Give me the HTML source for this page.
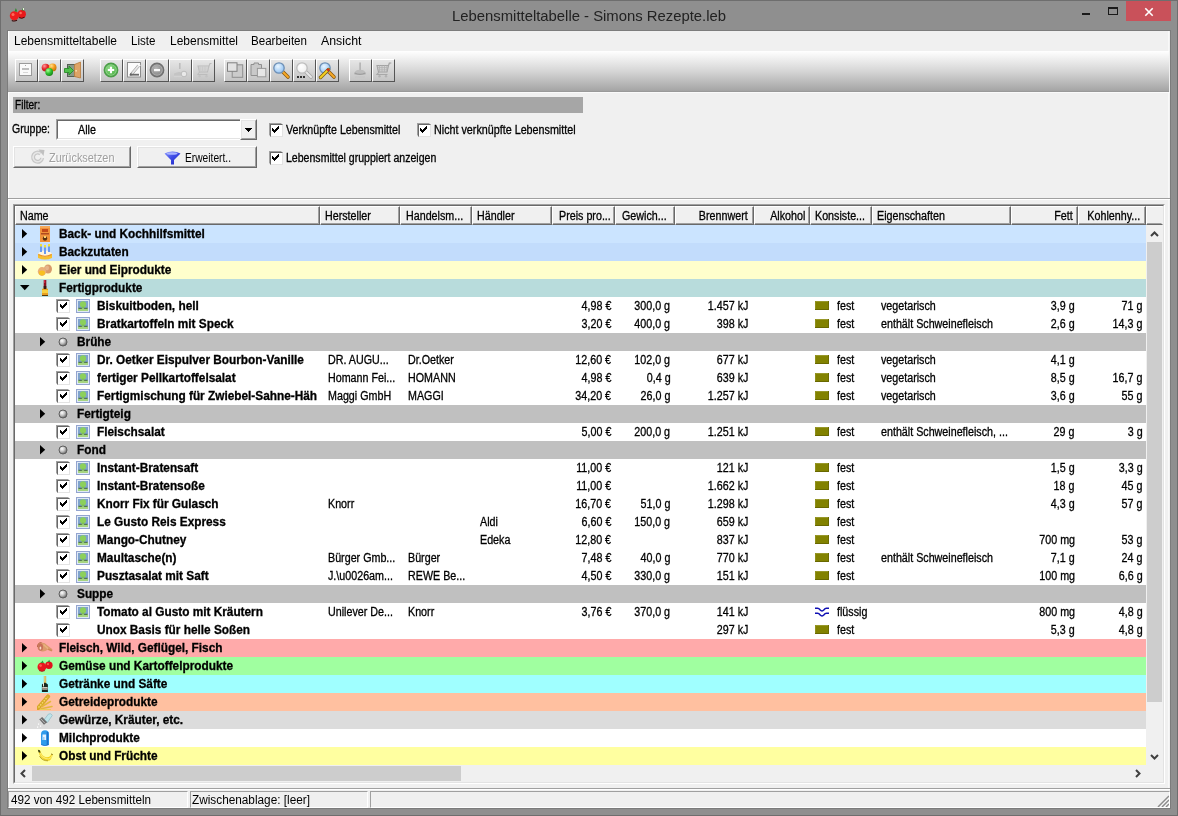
<!DOCTYPE html>
<html><head><meta charset="utf-8"><title>Lebensmitteltabelle</title><style>
*{margin:0;padding:0;box-sizing:border-box}
svg{display:block}
html,body{width:1178px;height:816px;overflow:hidden}
body{position:relative;background:#8f8f8f;font-family:"Liberation Sans",sans-serif;font-size:12px;color:#000}
.a{position:absolute}
.t,.tr{-webkit-text-stroke:.3px #000}
.t{position:absolute;white-space:nowrap;font-size:12px;line-height:18px;height:18px;transform-origin:0 0;transform:scaleX(.893)}
.tr{position:absolute;white-space:nowrap;font-size:12px;line-height:18px;height:18px;transform-origin:100% 0;transform:scaleX(.893);text-align:right}
.b{font-weight:bold;transform:scaleX(.985)}
.row{position:absolute;left:15px;width:1131px;height:18px}
.hc{position:absolute;top:206px;height:19px;background:#f0f0f0;border-left:1px solid #fff;border-top:1px solid #fff;border-right:1px solid #696969;border-bottom:1px solid #696969}
.hc:after{content:"";position:absolute;left:0;top:0;right:0;bottom:0;border-right:1px solid #a0a0a0;border-bottom:1px solid #a0a0a0}
.hl{border-right-color:#f0f0f0}.hl:after{border-right-color:#f0f0f0}
.cb{position:absolute;width:13px;height:13px;background:#fff;border:1px solid;border-color:#a0a0a0 #fff #fff #a0a0a0}
.cb:before{content:"";position:absolute;left:0;top:0;width:11px;height:11px;border:1px solid;border-color:#696969 #e3e3e3 #e3e3e3 #696969}
.cb svg{position:absolute;left:2px;top:2px}
.cl svg{left:3px}
.btn{position:absolute;background:#f0f0f0;border:1px solid;border-color:#fff #696969 #696969 #fff}
.btn:before{content:"";position:absolute;left:0;top:0;right:0;bottom:0;border:1px solid;border-color:#e3e3e3 #a0a0a0 #a0a0a0 #e3e3e3}
.tb{position:absolute;top:59px;width:23px;height:23px;background:linear-gradient(#e6e6e6,#c4c4c4);border:1px solid;border-color:#fff #555 #555 #fff}
.tb svg{position:absolute;left:1px;top:1px}
</style></head><body><div id="w" style="position:absolute;left:0;top:0;width:1178px;height:816px;will-change:transform">
<div class="a" style="left:0;top:0;width:1178px;height:816px;border:1px solid #6e6e6e"></div>
<div class="a" style="left:7px;top:30px;width:1164px;height:779px;background:#7c7c7c"></div>
<div class="a" style="left:8px;top:31px;width:1162px;height:777px;background:#f0f0f0"></div>
<div class="a" style="left:8px;top:31px;width:1px;height:757px;background:#fff"></div>
<div class="a" style="left:1168px;top:31px;width:1px;height:757px;background:#f8f8f8"></div>
<div id="title" class="a" style="left: 451.5px; top: 5px; font-size: 15px; line-height: 22px; white-space: nowrap; color: rgb(34, 34, 34); transform-origin: 0px 0px; transform: scaleX(0.9898);">Lebensmitteltabelle - Simons Rezepte.leb</div>
<svg class="a" style="left:9px;top:7px" width="18" height="15" viewBox="0 0 18 15">
<circle cx="12.8" cy="7.2" r="4.1" fill="#e8191c"></circle><path d="M10 10.6q2.800 1.600 5.600-.400" stroke="#4a0808" stroke-width="1" fill="none"></path>
<circle cx="5.400" cy="8.800" r="4.600" fill="#ee1c1e"></circle>
<circle cx="4" cy="7.400" r="1.500" fill="#ff6a5a"></circle><circle cx="11.600" cy="6" r="1.300" fill="#ff6a5a"></circle>
<path d="M5.500 4.600l1.400-3.600 1.400 3.600zM13 3.400l1.200-3 1.200 3z" fill="#2a8a2a"></path><rect x="14" y="1" width="1" height="2" fill="#e8f8d8"></rect>
<path d="M2.800 13.400q2.600 1.200 5.200-.200" stroke="#3a0606" stroke-width="1.100" fill="none"></path></svg>
<div class="a" style="left:1082px;top:13px;width:8px;height:2px;background:#1a1a1a"></div>
<div class="a" style="left:1108px;top:7px;width:10px;height:8px;border:1px solid #1a1a1a;border-top-width:2px"></div>
<div class="a" style="left:1126px;top:1px;width:45px;height:20px;background:#c9515a"></div>
<svg class="a" style="left:1144px;top:7px" width="10" height="10" viewBox="0 0 10 10"><path d="M1.3 1.3l7.4 7.4M8.7 1.3l-7.4 7.4" stroke="#fff" stroke-width="1.6"></path></svg>
<div class="a" style="left: 14px; top: 32px; line-height: 18px; white-space: nowrap; transform-origin: 0px 0px; transform: scaleX(0.9961);">Lebensmitteltabelle</div>
<div class="a" style="left: 131px; top: 32px; line-height: 18px; white-space: nowrap; transform-origin: 0px 0px; transform: scaleX(0.9661);">Liste</div>
<div class="a" style="left: 169.5px; top: 32px; line-height: 18px; white-space: nowrap; transform-origin: 0px 0px; transform: scaleX(0.9993);">Lebensmittel</div>
<div class="a" style="left: 251px; top: 32px; line-height: 18px; white-space: nowrap; transform-origin: 0px 0px; transform: scaleX(0.9647);">Bearbeiten</div>
<div class="a" style="left: 321px; top: 32px; line-height: 18px; white-space: nowrap; transform-origin: 0px 0px; transform: scaleX(1.029);">Ansicht</div>
<div class="a" style="left:8px;top:51px;width:1161px;height:41px;background:linear-gradient(#ffffff 0%,#f5f5f5 12%,#d5d5d5 50%,#a6a6a6 96%,#949494 100%)"></div>
<div class="tb" style="left:15px"><svg width="19" height="19" viewBox="0 0 19 19"><rect x="2.5" y="2.5" width="12" height="12" fill="#fafafa" stroke="#9a9a9a"></rect><rect x="5" y="7" width="7" height="2" fill="#bdbdbd"></rect><rect x="6" y="11" width="5" height="1" fill="#d8d8d8"></rect><rect x="8" y="4" width="1" height="1" fill="#aaa"></rect></svg></div>
<div class="tb" style="left:38px"><svg width="19" height="19" viewBox="0 0 19 19"><defs><radialGradient id="rb" cx=".35" cy=".3" r=".8"><stop offset="0" stop-color="#ff9a9a"></stop><stop offset=".5" stop-color="#e3262b"></stop><stop offset="1" stop-color="#9a1010"></stop></radialGradient>
<radialGradient id="ob" cx=".35" cy=".3" r=".8"><stop offset="0" stop-color="#ffe08a"></stop><stop offset=".5" stop-color="#f59a1a"></stop><stop offset="1" stop-color="#b96a08"></stop></radialGradient>
<radialGradient id="gb" cx=".35" cy=".3" r=".8"><stop offset="0" stop-color="#a8ff9a"></stop><stop offset=".5" stop-color="#2fc02f"></stop><stop offset="1" stop-color="#157a15"></stop></radialGradient></defs>
<circle cx="5.6" cy="6.6" r="3.9" fill="url(#rb)"></circle><circle cx="12.6" cy="6.4" r="3.9" fill="url(#ob)"></circle><circle cx="9.2" cy="11" r="3.9" fill="url(#gb)"></circle></svg></div>
<div class="tb" style="left:61px"><svg width="19" height="19" viewBox="0 0 19 19"><rect x="4.5" y="3.5" width="8" height="12" fill="#8a9a8a" stroke="#556055"></rect>
<path d="M11.5 3.5l6-2.5v16l-6-1.5z" fill="#dea466" stroke="#b87a3a" stroke-width=".8"></path><rect x="12.5" y="9" width="1.2" height="1.6" fill="#fff2c8"></rect>
<path d="M1.5 7.5h4.5v-2.5l4.5 4.5-4.5 4.5v-2.5h-4.5z" fill="#4fc04a" stroke="#2a8a2a" stroke-width=".9"></path></svg></div>
<div class="tb" style="left:100px"><svg width="19" height="19" viewBox="0 0 19 19"><defs><radialGradient id="gp" cx=".4" cy=".35" r=".75"><stop offset="0" stop-color="#9ee096"></stop><stop offset=".7" stop-color="#62c05a"></stop><stop offset="1" stop-color="#58b450"></stop></radialGradient></defs>
<g transform="translate(-1,-1)"><circle cx="10" cy="10" r="6.600" fill="#8fd68a" stroke="#4c9e48" stroke-width="1.600"></circle><circle cx="10" cy="10" r="4.800" fill="url(#gp)"></circle><path d="M9 6.800h2v2.200h2.200v2h-2.200v2.200h-2v-2.200h-2.200v-2h2.200z" fill="#fff"></path></g></svg></div>
<div class="tb" style="left:123px"><svg width="19" height="19" viewBox="0 0 19 19"><g transform="translate(-2,-2)"><rect x="4.500" y="3.500" width="13" height="14.500" fill="#fbfbfb" stroke="#8c8c8c"></rect>
<path d="M7.500 14.500l8-9.500 1.800 1.600-8 9.500-2.400.600z" fill="#e6e6e6" stroke="#a2a2a2" stroke-width=".8"></path><path d="M14.600 4.600l2.600 2.200" stroke="#fff" stroke-width="1.600"></path><rect x="7" y="14.800" width="9" height="1.800" fill="#6a6a6a"></rect><path d="M7 15.800l1.500-2" stroke="#5a5a5a" stroke-width="1"></path></g></svg></div>
<div class="tb" style="left:146px"><svg width="19" height="19" viewBox="0 0 19 19"><defs><radialGradient id="gm" cx=".4" cy=".35" r=".75"><stop offset="0" stop-color="#b8b8b8"></stop><stop offset=".7" stop-color="#969696"></stop><stop offset="1" stop-color="#8c8c8c"></stop></radialGradient></defs>
<g transform="translate(-1,-1)"><circle cx="10" cy="10" r="6.600" fill="#b0b0b0" stroke="#707070" stroke-width="1.600"></circle><circle cx="10" cy="10" r="4.800" fill="url(#gm)"></circle><rect x="7" y="9" width="6" height="2.200" fill="#fafafa"></rect></g></svg></div>
<div class="tb" style="left:169px"><svg width="19" height="19" viewBox="0 0 19 19"><rect x="8" y="2" width="1.6" height="6" fill="#bdbdbd"></rect><path d="M3 12.5q6-3 9 0v2h-9z" fill="#c4c4c4"></path><circle cx="13" cy="13" r="2.8" fill="#e9e9e9" stroke="#bcbcbc"></circle><rect x="3" y="15" width="8" height="1" fill="#d2d2d2"></rect></svg></div>
<div class="tb" style="left:192px"><svg width="19" height="19" viewBox="0 0 19 19"><path d="M4 5h11l-1.5 6h-8zM15 5l1-2.5h1.5" fill="none" stroke="#bcbcbc" stroke-width="1.1"></path><path d="M6 5v6M8.5 5v6M11 5v6M4.5 7h10M5 9h9" stroke="#c8c8c8" stroke-width=".8"></path>
<path d="M5.5 11l-2 2.5h10" fill="none" stroke="#bcbcbc"></path><circle cx="5.5" cy="15.2" r="1.2" fill="#c2c2c2"></circle><circle cx="12.5" cy="15.2" r="1.2" fill="#c2c2c2"></circle></svg></div>
<div class="tb" style="left:224px"><svg width="19" height="19" viewBox="0 0 19 19"><rect x="6.200" y="3.800" width="10.500" height="12.500" fill="#cbcbcb" stroke="#8e8e8e"></rect><rect x="1.500" y="1.800" width="9.500" height="8.500" fill="#e3e3e3" stroke="#808080"></rect></svg></div>
<div class="tb" style="left:247px"><svg width="19" height="19" viewBox="0 0 19 19"><path d="M2 3.500h3v-1.500h4.500v1.500h3v11h-10.500z" fill="#c9c9c9" stroke="#909090"></path><rect x="8.400" y="7.400" width="8.400" height="8.400" fill="#e6e6e6" stroke="#9a9a9a"></rect></svg></div>
<div class="tb" style="left:270px"><svg width="19" height="19" viewBox="0 0 19 19"><defs><radialGradient id="lza" cx=".4" cy=".35" r=".8"><stop offset="0" stop-color="#eaf6ff"></stop><stop offset="1" stop-color="#7fb8f2"></stop></radialGradient></defs>
<path d="M10.5 10.5l5.5 5.5" stroke="#8a5a10" stroke-width="3.6" stroke-linecap="round"></path><path d="M10.5 10.5l5.5 5.5" stroke="#f7a928" stroke-width="2" stroke-linecap="round"></path>
<circle cx="7" cy="7" r="5.2" fill="url(#lza)" stroke="#6d8fb5" stroke-width="1.3"></circle></svg></div>
<div class="tb" style="left:293px"><svg width="19" height="19" viewBox="0 0 19 19"><defs><radialGradient id="lzb" cx=".4" cy=".35" r=".8"><stop offset="0" stop-color="#ffffff"></stop><stop offset="1" stop-color="#ececec"></stop></radialGradient></defs>
<path d="M10.5 10.5l5.5 5.5" stroke="#a8a8a8" stroke-width="3.6" stroke-linecap="round"></path><path d="M10.5 10.5l5.5 5.5" stroke="#e8e8e8" stroke-width="2" stroke-linecap="round"></path>
<circle cx="7" cy="7" r="5.2" fill="url(#lzb)" stroke="#bdbdbd" stroke-width="1.3"></circle><rect x="2" y="15" width="2" height="2" fill="#333"></rect><rect x="5" y="15" width="2" height="2" fill="#333"></rect><rect x="8" y="15" width="2" height="2" fill="#333"></rect></svg></div>
<div class="tb" style="left:316px"><svg width="19" height="19" viewBox="0 0 19 19"><defs><radialGradient id="lzc" cx=".4" cy=".35" r=".8"><stop offset="0" stop-color="#eaf6ff"></stop><stop offset="1" stop-color="#7fb8f2"></stop></radialGradient></defs>
<path d="M10.5 10.5l5.5 5.5" stroke="#8a5a10" stroke-width="3.6" stroke-linecap="round"></path><path d="M10.5 10.5l5.5 5.5" stroke="#f7a928" stroke-width="2" stroke-linecap="round"></path>
<circle cx="7" cy="7" r="5.2" fill="url(#lzc)" stroke="#6d8fb5" stroke-width="1.3"></circle><path d="M2.5 16.5l8-8" stroke="#7a5a08" stroke-width="3.4" stroke-linecap="round"></path><path d="M2.5 16.5l8-8" stroke="#f5d020" stroke-width="2" stroke-linecap="round"></path><path d="M9.3 9.7l1.6-1.6" stroke="#d82020" stroke-width="2.4"></path></svg></div>
<div class="tb" style="left:349px"><svg width="19" height="19" viewBox="0 0 19 19"><rect x="8.300" y="1.500" width="1.600" height="7.500" fill="#b2b2b2"></rect><path d="M3.500 12.500q0-3.500 5.500-3.700 5.500.200 5.500 3.700v1.500h-11z" fill="#bdbdbd"></path><path d="M3.500 12q5.500 2.800 11 0" stroke="#9c9c9c" stroke-width="1.200" fill="none"></path><rect x="4" y="15.500" width="10" height="1" fill="#c4c4c4"></rect></svg></div>
<div class="tb" style="left:372px"><svg width="19" height="19" viewBox="0 0 19 19"><path d="M3 4.500h11.500l-1.500 6.500h-8.500zM14.500 4.500l.8-2.500h2" fill="#d4d4d4" stroke="#a2a2a2" stroke-width="1.100"></path><path d="M5.500 4.500v6.500M8 4.500v6.500M10.500 4.500v6.500M12.800 4.500v6.500M3.500 6.600h10.600M4 8.800h9.600" stroke="#b2b2b2" stroke-width=".8"></path>
<path d="M5 11l-2 2.500h10.500" fill="none" stroke="#a8a8a8" stroke-width="1.200"></path><circle cx="5.500" cy="15.200" r="1.200" fill="#b2b2b2"></circle><circle cx="12" cy="15.200" r="1.200" fill="#b2b2b2"></circle></svg></div>
<div class="a" style="left:8px;top:92px;width:1162px;height:1px;background:#fafafa"></div>
<div class="a" style="left:13px;top:97px;width:570px;height:16px;background:#a6a6a6"></div>
<div class="a" style="left: 14.6px; top: 96px; line-height: 18px; white-space: nowrap; transform-origin: 0px 0px; -webkit-text-stroke: 0.3px rgb(0, 0, 0); transform: scaleX(0.84);">Filter:</div>
<div class="a" style="left: 12.2px; top: 120px; line-height: 18px; white-space: nowrap; transform-origin: 0px 0px; -webkit-text-stroke: 0.3px rgb(0, 0, 0); transform: scaleX(0.8764);">Gruppe:</div>
<div class="a" style="left:56px;top:119px;width:201px;height:21px;background:#fff;border:1px solid;border-color:#a0a0a0 #fff #fff #a0a0a0"><div class="a" style="left:0;top:0;right:0;bottom:0;border:1px solid;border-color:#696969 #e3e3e3 #e3e3e3 #696969"></div><div class="btn" style="right:-1px;top:-1px;width:17px;height:21px"><svg class="a" style="left:4px;top:8px" width="7" height="4" viewBox="0 0 7 4" shape-rendering="crispEdges"><path d="M0 0h7v1h-1v1h-1v1h-1v1h-1v-1h-1v-1h-1v-1h-1z" fill="#000"></path></svg></div></div>
<div class="t" style="left:78px;top:121px">Alle</div>
<div class="cb" style="left:269px;top:123px"><svg width="7" height="7" viewBox="0 0 7 7" shape-rendering="crispEdges"><path d="M0 2h1v1h1v1h1v-1h1v-1h1v-1h1v-1h1v3h-1v1h-1v1h-1v1h-1v1h-1v-1h-1v-1h-1z" fill="#000"></path></svg></div>
<div class="a" style="left: 285.6px; top: 121px; line-height: 18px; white-space: nowrap; transform-origin: 0px 0px; -webkit-text-stroke: 0.3px rgb(0, 0, 0); transform: scaleX(0.8878);">Verknüpfte Lebensmittel</div>
<div class="cb" style="left:417px;top:123px"><svg width="7" height="7" viewBox="0 0 7 7" shape-rendering="crispEdges"><path d="M0 2h1v1h1v1h1v-1h1v-1h1v-1h1v-1h1v3h-1v1h-1v1h-1v1h-1v1h-1v-1h-1v-1h-1z" fill="#000"></path></svg></div>
<div class="a" style="left: 434.3px; top: 121px; line-height: 18px; white-space: nowrap; transform-origin: 0px 0px; -webkit-text-stroke: 0.3px rgb(0, 0, 0); transform: scaleX(0.8957);">Nicht verknüpfte Lebensmittel</div>
<div class="cb" style="left:269px;top:151px"><svg width="7" height="7" viewBox="0 0 7 7" shape-rendering="crispEdges"><path d="M0 2h1v1h1v1h1v-1h1v-1h1v-1h1v-1h1v3h-1v1h-1v1h-1v1h-1v1h-1v-1h-1v-1h-1z" fill="#000"></path></svg></div>
<div class="a" style="left: 285.6px; top: 149px; line-height: 18px; white-space: nowrap; transform-origin: 0px 0px; -webkit-text-stroke: 0.3px rgb(0, 0, 0); transform: scaleX(0.8801);">Lebensmittel gruppiert anzeigen</div>
<div class="btn" style="left:13px;top:146px;width:118px;height:22px"></div>
<div class="a" style="left: 48.5px; top: 149px; line-height: 18px; white-space: nowrap; transform-origin: 0px 0px; color: rgb(160, 160, 160); text-shadow: rgb(255, 255, 255) 1px 1px 0px; transform: scaleX(0.9093);">Zurücksetzen</div>
<svg class="a" style="left:30px;top:149px" width="16" height="16" viewBox="0 0 16 16"><path d="M12.2 9a4.6 4.6 0 1 1-1.6-4.4" stroke="#c6c6c6" stroke-width="4" fill="none"></path><path d="M12.2 9a4.6 4.6 0 1 1-1.6-4.4" stroke="#e6e6e6" stroke-width="1.6" fill="none"></path><path d="M8.5 0.5l6 .5-1 6z" fill="#c0c0c0"></path></svg>
<div class="btn" style="left:137px;top:146px;width:120px;height:22px"></div>
<div class="a" style="left: 184.5px; top: 149px; line-height: 18px; white-space: nowrap; transform-origin: 0px 0px; transform: scaleX(0.8516);">Erweitert..</div>
<svg class="a" style="left:164px;top:151px" width="17" height="14" viewBox="0 0 17 14"><defs><linearGradient id="fg" x1="0" y1="0" x2="1" y2="1"><stop offset="0" stop-color="#8a98ff"></stop><stop offset=".45" stop-color="#3f4ce6"></stop><stop offset="1" stop-color="#1c24c0"></stop></linearGradient></defs>
<path d="M0.5 2.5Q8.5-1.5 16.5 2.5L10 9v4.5H7V9z" fill="url(#fg)"></path><ellipse cx="8" cy="2.5" rx="5.5" ry="1.3" fill="#aab4ff"></ellipse></svg>
<div class="a" style="left:8px;top:198px;width:1162px;height:1px;background:#a0a0a0"></div>
<div class="a" style="left:8px;top:199px;width:1162px;height:1px;background:#fff"></div>
<div class="a" style="left:13px;top:204px;width:1152px;height:580px;border:1px solid;border-color:#a0a0a0 #fff #fff #a0a0a0"></div>
<div class="a" style="left:14px;top:205px;width:1150px;height:578px;border:1px solid;border-color:#696969 #e3e3e3 #e3e3e3 #696969;background:#fff"></div>
<div class="hc" style="left:15px;width:305px"></div>
<div class="t" style="left:20.2px;top:207px;line-height:19px">Name</div>
<div class="hc" style="left:320px;width:80px"></div>
<div class="t" style="left:325.2px;top:207px;line-height:19px">Hersteller</div>
<div class="hc" style="left:400px;width:72px"></div>
<div class="t" style="left:406.2px;top:207px;line-height:19px">Handelsm...</div>
<div class="hc" style="left:472px;width:80px"></div>
<div class="t" style="left:477.2px;top:207px;line-height:19px">Händler</div>
<div class="hc" style="left:552px;width:63px"></div>
<div class="t" style="left:558.7px;top:207px;line-height:19px">Preis pro...</div>
<div class="hc" style="left:615px;width:60px"></div>
<div class="t" style="left:622.4000000000001px;top:207px;line-height:19px">Gewich...</div>
<div class="hc" style="left:675px;width:79px"></div>
<div class="tr" style="right:430.5px;top:207px;line-height:19px">Brennwert</div>
<div class="hc" style="left:754px;width:56px"></div>
<div class="tr" style="right:373px;top:207px;line-height:19px">Alkohol</div>
<div class="hc" style="left:810px;width:62px"></div>
<div class="t" style="left:815.2px;top:207px;line-height:19px">Konsiste...</div>
<div class="hc" style="left:872px;width:139px"></div>
<div class="t" style="left:877.2px;top:207px;line-height:19px">Eigenschaften</div>
<div class="hc" style="left:1011px;width:67px"></div>
<div class="tr" style="right:105.70000000000005px;top:207px;line-height:19px">Fett</div>
<div class="hc" style="left:1078px;width:68px"></div>
<div class="tr" style="right:38px;top:207px;line-height:19px">Kohlenhy...</div>
<div class="hc hl" style="left:1146px;width:17px"></div>
<div class="row" style="top:225px;background:#cbe4ff"></div>
<svg class="a" style="left:22px;top:229px" width="6" height="10" viewBox="0 0 6 10"><path d="M0 0v9.5l5.2-4.75z" fill="#000"></path></svg>
<div class="a" style="left:37px;top:226px;width:16px;height:16px"><svg width="16" height="16" viewBox="0 0 16 16"><rect x="3" y="0" width="10" height="16" fill="#f0913a"></rect><rect x="3" y="0" width="10" height="2" fill="#f6a85a"></rect><rect x="5" y="3" width="6" height="3" fill="#c44a1a"></rect><rect x="4" y="7" width="8" height="1.5" fill="#b04a20"></rect><circle cx="8" cy="12.5" r="2.2" fill="#5a3010"></circle><rect x="7" y="10" width="2" height="2" fill="#f8d070"></rect></svg></div>
<div class="t b" style="left:59.1px;top:225px">Back- und Kochhilfsmittel</div>
<div class="row" style="top:243px;background:#c2dcfc"></div>
<svg class="a" style="left:22px;top:247px" width="6" height="10" viewBox="0 0 6 10"><path d="M0 0v9.5l5.2-4.75z" fill="#000"></path></svg>
<div class="a" style="left:37px;top:244px;width:16px;height:16px"><svg width="16" height="16" viewBox="0 0 16 16"><path d="M1 10q7-4 14 0v4q-7 3-14 0z" fill="#f5c030"></path><ellipse cx="8" cy="9.5" rx="6.5" ry="3" fill="#fff4e0"></ellipse><path d="M1.5 10.5q6.5 3.5 13 0" stroke="#e88a20" stroke-width="1.2" fill="none"></path><rect x="3" y="2" width="2" height="6" fill="#6a9af0"></rect><rect x="7" y="3" width="2" height="7" fill="#6a9af0"></rect><rect x="11" y="2" width="2" height="6" fill="#6a9af0"></rect><rect x="3" y="0" width="2" height="2.5" fill="#f0e040"></rect><rect x="7" y="1" width="2" height="2.5" fill="#f0e040"></rect><rect x="11" y="0" width="2" height="2.5" fill="#f0e040"></rect></svg></div>
<div class="t b" style="left:59.1px;top:243px">Backzutaten</div>
<div class="row" style="top:261px;background:#ffffcc"></div>
<svg class="a" style="left:22px;top:265px" width="6" height="10" viewBox="0 0 6 10"><path d="M0 0v9.5l5.2-4.75z" fill="#000"></path></svg>
<div class="a" style="left:37px;top:262px;width:16px;height:16px"><svg width="16" height="16" viewBox="0 0 16 16"><ellipse cx="11" cy="7" rx="4" ry="4.6" fill="#d89a6a"></ellipse><ellipse cx="10" cy="6" rx="2" ry="2.4" fill="#e6b48a"></ellipse><ellipse cx="5" cy="9.5" rx="4.2" ry="4.4" fill="#eab078"></ellipse><ellipse cx="5" cy="11" rx="3" ry="2.4" fill="#f8c020"></ellipse></svg></div>
<div class="t b" style="left:59.1px;top:261px">Eier und Eiprodukte</div>
<div class="row" style="top:279px;background:#b8dcdc"></div>
<svg class="a" style="left:20px;top:285px" width="10" height="6" viewBox="0 0 10 6"><path d="M0 0h9.5l-4.75 5.2z" fill="#000"></path></svg>
<div class="a" style="left:37px;top:280px;width:16px;height:16px"><svg width="16" height="16" viewBox="0 0 16 16"><rect x="6.7" y="0" width="2.6" height="8" fill="#8a1020"></rect><rect x="7.2" y="0" width="1" height="3" fill="#e03050"></rect><path d="M5 9q3-2 6 0v7h-6z" fill="#e8a020"></path><rect x="5" y="10" width="6" height="3" fill="#f8d040"></rect><rect x="5" y="15" width="6" height="1.2" fill="#5a3a08"></rect><rect x="6.7" y="6" width="2.6" height="3" fill="#3a1a10"></rect></svg></div>
<div class="t b" style="left:59.1px;top:279px">Fertigprodukte</div>
<div class="cb cl" style="left:56px;top:299px"><svg width="7" height="7" viewBox="0 0 7 7" shape-rendering="crispEdges"><path d="M0 2h1v1h1v1h1v-1h1v-1h1v-1h1v-1h1v3h-1v1h-1v1h-1v1h-1v1h-1v-1h-1v-1h-1z" fill="#000"></path></svg></div>
<div class="a" style="left:76px;top:299px;width:14px;height:14px"><svg width="14" height="14" viewBox="0 0 14 14"><rect x=".5" y=".5" width="13" height="13" fill="#dfe9f6" stroke="#93a4d0"></rect><rect x="2" y="2" width="10" height="10" fill="#7fa3cc"></rect><rect x="2" y="9.300" width="10" height="2.700" fill="#a6d480"></rect><circle cx="7" cy="5.400" r="3.100" fill="#8cd05c"></circle><rect x="6.200" y="7.500" width="1.600" height="2" fill="#7cc04c"></rect><path d="M2.500 9.300h3.400M8.100 9.300h3.400" stroke="#3a5a32" stroke-width=".9"></path></svg></div>
<div class="t b" style="left:97.3px;top:297px">Biskuitboden, hell</div>
<div class="tr" style="right:566.5px;top:297px">4,98 €</div>
<div class="tr" style="right:507.5px;top:297px">300,0 g</div>
<div class="tr" style="right:429.3px;top:297px">1.457 kJ</div>
<div class="tr" style="right:103.4px;top:297px">3,9 g</div>
<div class="tr" style="right:35.6px;top:297px">71 g</div>
<div class="a" style="left:815px;top:301px;width:14px;height:9px"><svg width="14" height="9" viewBox="0 0 14 9"><rect width="14" height="9" fill="#828200"></rect><rect width="14" height="1" fill="#98982a"></rect><rect width="1" height="9" fill="#90901c"></rect><rect y="8" width="14" height="1" fill="#686800"></rect><rect x="13" width="1" height="9" fill="#6c6c00"></rect></svg></div>
<div class="t" style="left:836.5px;top:297px">fest</div>
<div class="t" style="left:880.5px;top:297px">vegetarisch</div>
<div class="cb cl" style="left:56px;top:317px"><svg width="7" height="7" viewBox="0 0 7 7" shape-rendering="crispEdges"><path d="M0 2h1v1h1v1h1v-1h1v-1h1v-1h1v-1h1v3h-1v1h-1v1h-1v1h-1v1h-1v-1h-1v-1h-1z" fill="#000"></path></svg></div>
<div class="a" style="left:76px;top:317px;width:14px;height:14px"><svg width="14" height="14" viewBox="0 0 14 14"><rect x=".5" y=".5" width="13" height="13" fill="#dfe9f6" stroke="#93a4d0"></rect><rect x="2" y="2" width="10" height="10" fill="#7fa3cc"></rect><rect x="2" y="9.300" width="10" height="2.700" fill="#a6d480"></rect><circle cx="7" cy="5.400" r="3.100" fill="#8cd05c"></circle><rect x="6.200" y="7.500" width="1.600" height="2" fill="#7cc04c"></rect><path d="M2.500 9.300h3.400M8.100 9.300h3.400" stroke="#3a5a32" stroke-width=".9"></path></svg></div>
<div class="t b" style="left:97.3px;top:315px">Bratkartoffeln mit Speck</div>
<div class="tr" style="right:566.5px;top:315px">3,20 €</div>
<div class="tr" style="right:507.5px;top:315px">400,0 g</div>
<div class="tr" style="right:429.3px;top:315px">398 kJ</div>
<div class="tr" style="right:103.4px;top:315px">2,6 g</div>
<div class="tr" style="right:35.6px;top:315px">14,3 g</div>
<div class="a" style="left:815px;top:319px;width:14px;height:9px"><svg width="14" height="9" viewBox="0 0 14 9"><rect width="14" height="9" fill="#828200"></rect><rect width="14" height="1" fill="#98982a"></rect><rect width="1" height="9" fill="#90901c"></rect><rect y="8" width="14" height="1" fill="#686800"></rect><rect x="13" width="1" height="9" fill="#6c6c00"></rect></svg></div>
<div class="t" style="left:836.5px;top:315px">fest</div>
<div class="t" style="left:880.5px;top:315px">enthält Schweinefleisch</div>
<div class="row" style="top:333px;background:#c0c0c0"></div>
<svg class="a" style="left:40px;top:337px" width="6" height="10" viewBox="0 0 6 10"><path d="M0 0v9.5l5.2-4.75z" fill="#000"></path></svg>
<div class="a" style="left:58px;top:337px;width:10px;height:10px"><svg width="10" height="10" viewBox="0 0 10 10"><defs><radialGradient id="sb" cx=".38" cy=".35" r=".7"><stop offset="0" stop-color="#ffffff"></stop><stop offset=".45" stop-color="#c8c8c8"></stop><stop offset="1" stop-color="#5c5c5c"></stop></radialGradient></defs><circle cx="5" cy="5" r="4" fill="url(#sb)" stroke="#5e5e5e" stroke-width="1"></circle></svg></div>
<div class="t b" style="left:76.7px;top:333px">Brühe</div>
<div class="cb cl" style="left:56px;top:353px"><svg width="7" height="7" viewBox="0 0 7 7" shape-rendering="crispEdges"><path d="M0 2h1v1h1v1h1v-1h1v-1h1v-1h1v-1h1v3h-1v1h-1v1h-1v1h-1v1h-1v-1h-1v-1h-1z" fill="#000"></path></svg></div>
<div class="a" style="left:76px;top:353px;width:14px;height:14px"><svg width="14" height="14" viewBox="0 0 14 14"><rect x=".5" y=".5" width="13" height="13" fill="#dfe9f6" stroke="#93a4d0"></rect><rect x="2" y="2" width="10" height="10" fill="#7fa3cc"></rect><rect x="2" y="9.300" width="10" height="2.700" fill="#a6d480"></rect><circle cx="7" cy="5.400" r="3.100" fill="#8cd05c"></circle><rect x="6.200" y="7.500" width="1.600" height="2" fill="#7cc04c"></rect><path d="M2.500 9.300h3.400M8.100 9.300h3.400" stroke="#3a5a32" stroke-width=".9"></path></svg></div>
<div class="t b" style="left:97.3px;top:351px">Dr. Oetker Eispulver Bourbon-Vanille</div>
<div class="t" style="left:328.3px;top:351px">DR. AUGU...</div>
<div class="t" style="left:408.3px;top:351px">Dr.Oetker</div>
<div class="tr" style="right:566.5px;top:351px">12,60 €</div>
<div class="tr" style="right:507.5px;top:351px">102,0 g</div>
<div class="tr" style="right:429.3px;top:351px">677 kJ</div>
<div class="tr" style="right:103.4px;top:351px">4,1 g</div>
<div class="a" style="left:815px;top:355px;width:14px;height:9px"><svg width="14" height="9" viewBox="0 0 14 9"><rect width="14" height="9" fill="#828200"></rect><rect width="14" height="1" fill="#98982a"></rect><rect width="1" height="9" fill="#90901c"></rect><rect y="8" width="14" height="1" fill="#686800"></rect><rect x="13" width="1" height="9" fill="#6c6c00"></rect></svg></div>
<div class="t" style="left:836.5px;top:351px">fest</div>
<div class="t" style="left:880.5px;top:351px">vegetarisch</div>
<div class="cb cl" style="left:56px;top:371px"><svg width="7" height="7" viewBox="0 0 7 7" shape-rendering="crispEdges"><path d="M0 2h1v1h1v1h1v-1h1v-1h1v-1h1v-1h1v3h-1v1h-1v1h-1v1h-1v1h-1v-1h-1v-1h-1z" fill="#000"></path></svg></div>
<div class="a" style="left:76px;top:371px;width:14px;height:14px"><svg width="14" height="14" viewBox="0 0 14 14"><rect x=".5" y=".5" width="13" height="13" fill="#dfe9f6" stroke="#93a4d0"></rect><rect x="2" y="2" width="10" height="10" fill="#7fa3cc"></rect><rect x="2" y="9.300" width="10" height="2.700" fill="#a6d480"></rect><circle cx="7" cy="5.400" r="3.100" fill="#8cd05c"></circle><rect x="6.200" y="7.500" width="1.600" height="2" fill="#7cc04c"></rect><path d="M2.500 9.300h3.400M8.100 9.300h3.400" stroke="#3a5a32" stroke-width=".9"></path></svg></div>
<div class="t b" style="left:97.3px;top:369px">fertiger Pellkartoffelsalat</div>
<div class="t" style="left:328.3px;top:369px">Homann Fei...</div>
<div class="t" style="left:408.3px;top:369px">HOMANN</div>
<div class="tr" style="right:566.5px;top:369px">4,98 €</div>
<div class="tr" style="right:507.5px;top:369px">0,4 g</div>
<div class="tr" style="right:429.3px;top:369px">639 kJ</div>
<div class="tr" style="right:103.4px;top:369px">8,5 g</div>
<div class="tr" style="right:35.6px;top:369px">16,7 g</div>
<div class="a" style="left:815px;top:373px;width:14px;height:9px"><svg width="14" height="9" viewBox="0 0 14 9"><rect width="14" height="9" fill="#828200"></rect><rect width="14" height="1" fill="#98982a"></rect><rect width="1" height="9" fill="#90901c"></rect><rect y="8" width="14" height="1" fill="#686800"></rect><rect x="13" width="1" height="9" fill="#6c6c00"></rect></svg></div>
<div class="t" style="left:836.5px;top:369px">fest</div>
<div class="t" style="left:880.5px;top:369px">vegetarisch</div>
<div class="cb cl" style="left:56px;top:389px"><svg width="7" height="7" viewBox="0 0 7 7" shape-rendering="crispEdges"><path d="M0 2h1v1h1v1h1v-1h1v-1h1v-1h1v-1h1v3h-1v1h-1v1h-1v1h-1v1h-1v-1h-1v-1h-1z" fill="#000"></path></svg></div>
<div class="a" style="left:76px;top:389px;width:14px;height:14px"><svg width="14" height="14" viewBox="0 0 14 14"><rect x=".5" y=".5" width="13" height="13" fill="#dfe9f6" stroke="#93a4d0"></rect><rect x="2" y="2" width="10" height="10" fill="#7fa3cc"></rect><rect x="2" y="9.300" width="10" height="2.700" fill="#a6d480"></rect><circle cx="7" cy="5.400" r="3.100" fill="#8cd05c"></circle><rect x="6.200" y="7.500" width="1.600" height="2" fill="#7cc04c"></rect><path d="M2.500 9.300h3.400M8.100 9.300h3.400" stroke="#3a5a32" stroke-width=".9"></path></svg></div>
<div class="t b" style="left:97.3px;top:387px">Fertigmischung für Zwiebel-Sahne-Häh</div>
<div class="t" style="left:328.3px;top:387px">Maggi GmbH</div>
<div class="t" style="left:408.3px;top:387px">MAGGI</div>
<div class="tr" style="right:566.5px;top:387px">34,20 €</div>
<div class="tr" style="right:507.5px;top:387px">26,0 g</div>
<div class="tr" style="right:429.3px;top:387px">1.257 kJ</div>
<div class="tr" style="right:103.4px;top:387px">3,6 g</div>
<div class="tr" style="right:35.6px;top:387px">55 g</div>
<div class="a" style="left:815px;top:391px;width:14px;height:9px"><svg width="14" height="9" viewBox="0 0 14 9"><rect width="14" height="9" fill="#828200"></rect><rect width="14" height="1" fill="#98982a"></rect><rect width="1" height="9" fill="#90901c"></rect><rect y="8" width="14" height="1" fill="#686800"></rect><rect x="13" width="1" height="9" fill="#6c6c00"></rect></svg></div>
<div class="t" style="left:836.5px;top:387px">fest</div>
<div class="t" style="left:880.5px;top:387px">vegetarisch</div>
<div class="row" style="top:405px;background:#c0c0c0"></div>
<svg class="a" style="left:40px;top:409px" width="6" height="10" viewBox="0 0 6 10"><path d="M0 0v9.5l5.2-4.75z" fill="#000"></path></svg>
<div class="a" style="left:58px;top:409px;width:10px;height:10px"><svg width="10" height="10" viewBox="0 0 10 10"><defs><radialGradient id="sb" cx=".38" cy=".35" r=".7"><stop offset="0" stop-color="#ffffff"></stop><stop offset=".45" stop-color="#c8c8c8"></stop><stop offset="1" stop-color="#5c5c5c"></stop></radialGradient></defs><circle cx="5" cy="5" r="4" fill="url(#sb)" stroke="#5e5e5e" stroke-width="1"></circle></svg></div>
<div class="t b" style="left:76.7px;top:405px">Fertigteig</div>
<div class="cb cl" style="left:56px;top:425px"><svg width="7" height="7" viewBox="0 0 7 7" shape-rendering="crispEdges"><path d="M0 2h1v1h1v1h1v-1h1v-1h1v-1h1v-1h1v3h-1v1h-1v1h-1v1h-1v1h-1v-1h-1v-1h-1z" fill="#000"></path></svg></div>
<div class="a" style="left:76px;top:425px;width:14px;height:14px"><svg width="14" height="14" viewBox="0 0 14 14"><rect x=".5" y=".5" width="13" height="13" fill="#dfe9f6" stroke="#93a4d0"></rect><rect x="2" y="2" width="10" height="10" fill="#7fa3cc"></rect><rect x="2" y="9.300" width="10" height="2.700" fill="#a6d480"></rect><circle cx="7" cy="5.400" r="3.100" fill="#8cd05c"></circle><rect x="6.200" y="7.500" width="1.600" height="2" fill="#7cc04c"></rect><path d="M2.500 9.300h3.400M8.100 9.300h3.400" stroke="#3a5a32" stroke-width=".9"></path></svg></div>
<div class="t b" style="left:97.3px;top:423px">Fleischsalat</div>
<div class="tr" style="right:566.5px;top:423px">5,00 €</div>
<div class="tr" style="right:507.5px;top:423px">200,0 g</div>
<div class="tr" style="right:429.3px;top:423px">1.251 kJ</div>
<div class="tr" style="right:103.4px;top:423px">29 g</div>
<div class="tr" style="right:35.6px;top:423px">3 g</div>
<div class="a" style="left:815px;top:427px;width:14px;height:9px"><svg width="14" height="9" viewBox="0 0 14 9"><rect width="14" height="9" fill="#828200"></rect><rect width="14" height="1" fill="#98982a"></rect><rect width="1" height="9" fill="#90901c"></rect><rect y="8" width="14" height="1" fill="#686800"></rect><rect x="13" width="1" height="9" fill="#6c6c00"></rect></svg></div>
<div class="t" style="left:836.5px;top:423px">fest</div>
<div class="t" style="left:880.5px;top:423px">enthält Schweinefleisch, ...</div>
<div class="row" style="top:441px;background:#c0c0c0"></div>
<svg class="a" style="left:40px;top:445px" width="6" height="10" viewBox="0 0 6 10"><path d="M0 0v9.5l5.2-4.75z" fill="#000"></path></svg>
<div class="a" style="left:58px;top:445px;width:10px;height:10px"><svg width="10" height="10" viewBox="0 0 10 10"><defs><radialGradient id="sb" cx=".38" cy=".35" r=".7"><stop offset="0" stop-color="#ffffff"></stop><stop offset=".45" stop-color="#c8c8c8"></stop><stop offset="1" stop-color="#5c5c5c"></stop></radialGradient></defs><circle cx="5" cy="5" r="4" fill="url(#sb)" stroke="#5e5e5e" stroke-width="1"></circle></svg></div>
<div class="t b" style="left:76.7px;top:441px">Fond</div>
<div class="cb cl" style="left:56px;top:461px"><svg width="7" height="7" viewBox="0 0 7 7" shape-rendering="crispEdges"><path d="M0 2h1v1h1v1h1v-1h1v-1h1v-1h1v-1h1v3h-1v1h-1v1h-1v1h-1v1h-1v-1h-1v-1h-1z" fill="#000"></path></svg></div>
<div class="a" style="left:76px;top:461px;width:14px;height:14px"><svg width="14" height="14" viewBox="0 0 14 14"><rect x=".5" y=".5" width="13" height="13" fill="#dfe9f6" stroke="#93a4d0"></rect><rect x="2" y="2" width="10" height="10" fill="#7fa3cc"></rect><rect x="2" y="9.300" width="10" height="2.700" fill="#a6d480"></rect><circle cx="7" cy="5.400" r="3.100" fill="#8cd05c"></circle><rect x="6.200" y="7.500" width="1.600" height="2" fill="#7cc04c"></rect><path d="M2.500 9.300h3.400M8.100 9.300h3.400" stroke="#3a5a32" stroke-width=".9"></path></svg></div>
<div class="t b" style="left:97.3px;top:459px">Instant-Bratensaft</div>
<div class="tr" style="right:566.5px;top:459px">11,00 €</div>
<div class="tr" style="right:429.3px;top:459px">121 kJ</div>
<div class="tr" style="right:103.4px;top:459px">1,5 g</div>
<div class="tr" style="right:35.6px;top:459px">3,3 g</div>
<div class="a" style="left:815px;top:463px;width:14px;height:9px"><svg width="14" height="9" viewBox="0 0 14 9"><rect width="14" height="9" fill="#828200"></rect><rect width="14" height="1" fill="#98982a"></rect><rect width="1" height="9" fill="#90901c"></rect><rect y="8" width="14" height="1" fill="#686800"></rect><rect x="13" width="1" height="9" fill="#6c6c00"></rect></svg></div>
<div class="t" style="left:836.5px;top:459px">fest</div>
<div class="cb cl" style="left:56px;top:479px"><svg width="7" height="7" viewBox="0 0 7 7" shape-rendering="crispEdges"><path d="M0 2h1v1h1v1h1v-1h1v-1h1v-1h1v-1h1v3h-1v1h-1v1h-1v1h-1v1h-1v-1h-1v-1h-1z" fill="#000"></path></svg></div>
<div class="a" style="left:76px;top:479px;width:14px;height:14px"><svg width="14" height="14" viewBox="0 0 14 14"><rect x=".5" y=".5" width="13" height="13" fill="#dfe9f6" stroke="#93a4d0"></rect><rect x="2" y="2" width="10" height="10" fill="#7fa3cc"></rect><rect x="2" y="9.300" width="10" height="2.700" fill="#a6d480"></rect><circle cx="7" cy="5.400" r="3.100" fill="#8cd05c"></circle><rect x="6.200" y="7.500" width="1.600" height="2" fill="#7cc04c"></rect><path d="M2.500 9.300h3.400M8.100 9.300h3.400" stroke="#3a5a32" stroke-width=".9"></path></svg></div>
<div class="t b" style="left:97.3px;top:477px">Instant-Bratensoße</div>
<div class="tr" style="right:566.5px;top:477px">11,00 €</div>
<div class="tr" style="right:429.3px;top:477px">1.662 kJ</div>
<div class="tr" style="right:103.4px;top:477px">18 g</div>
<div class="tr" style="right:35.6px;top:477px">45 g</div>
<div class="a" style="left:815px;top:481px;width:14px;height:9px"><svg width="14" height="9" viewBox="0 0 14 9"><rect width="14" height="9" fill="#828200"></rect><rect width="14" height="1" fill="#98982a"></rect><rect width="1" height="9" fill="#90901c"></rect><rect y="8" width="14" height="1" fill="#686800"></rect><rect x="13" width="1" height="9" fill="#6c6c00"></rect></svg></div>
<div class="t" style="left:836.5px;top:477px">fest</div>
<div class="cb cl" style="left:56px;top:497px"><svg width="7" height="7" viewBox="0 0 7 7" shape-rendering="crispEdges"><path d="M0 2h1v1h1v1h1v-1h1v-1h1v-1h1v-1h1v3h-1v1h-1v1h-1v1h-1v1h-1v-1h-1v-1h-1z" fill="#000"></path></svg></div>
<div class="a" style="left:76px;top:497px;width:14px;height:14px"><svg width="14" height="14" viewBox="0 0 14 14"><rect x=".5" y=".5" width="13" height="13" fill="#dfe9f6" stroke="#93a4d0"></rect><rect x="2" y="2" width="10" height="10" fill="#7fa3cc"></rect><rect x="2" y="9.300" width="10" height="2.700" fill="#a6d480"></rect><circle cx="7" cy="5.400" r="3.100" fill="#8cd05c"></circle><rect x="6.200" y="7.500" width="1.600" height="2" fill="#7cc04c"></rect><path d="M2.500 9.300h3.400M8.100 9.300h3.400" stroke="#3a5a32" stroke-width=".9"></path></svg></div>
<div class="t b" style="left:97.3px;top:495px">Knorr Fix für Gulasch</div>
<div class="t" style="left:328.3px;top:495px">Knorr</div>
<div class="tr" style="right:566.5px;top:495px">16,70 €</div>
<div class="tr" style="right:507.5px;top:495px">51,0 g</div>
<div class="tr" style="right:429.3px;top:495px">1.298 kJ</div>
<div class="tr" style="right:103.4px;top:495px">4,3 g</div>
<div class="tr" style="right:35.6px;top:495px">57 g</div>
<div class="a" style="left:815px;top:499px;width:14px;height:9px"><svg width="14" height="9" viewBox="0 0 14 9"><rect width="14" height="9" fill="#828200"></rect><rect width="14" height="1" fill="#98982a"></rect><rect width="1" height="9" fill="#90901c"></rect><rect y="8" width="14" height="1" fill="#686800"></rect><rect x="13" width="1" height="9" fill="#6c6c00"></rect></svg></div>
<div class="t" style="left:836.5px;top:495px">fest</div>
<div class="cb cl" style="left:56px;top:515px"><svg width="7" height="7" viewBox="0 0 7 7" shape-rendering="crispEdges"><path d="M0 2h1v1h1v1h1v-1h1v-1h1v-1h1v-1h1v3h-1v1h-1v1h-1v1h-1v1h-1v-1h-1v-1h-1z" fill="#000"></path></svg></div>
<div class="a" style="left:76px;top:515px;width:14px;height:14px"><svg width="14" height="14" viewBox="0 0 14 14"><rect x=".5" y=".5" width="13" height="13" fill="#dfe9f6" stroke="#93a4d0"></rect><rect x="2" y="2" width="10" height="10" fill="#7fa3cc"></rect><rect x="2" y="9.300" width="10" height="2.700" fill="#a6d480"></rect><circle cx="7" cy="5.400" r="3.100" fill="#8cd05c"></circle><rect x="6.200" y="7.500" width="1.600" height="2" fill="#7cc04c"></rect><path d="M2.500 9.300h3.400M8.100 9.300h3.400" stroke="#3a5a32" stroke-width=".9"></path></svg></div>
<div class="t b" style="left:97.3px;top:513px">Le Gusto Reis Express</div>
<div class="t" style="left:480.3px;top:513px">Aldi</div>
<div class="tr" style="right:566.5px;top:513px">6,60 €</div>
<div class="tr" style="right:507.5px;top:513px">150,0 g</div>
<div class="tr" style="right:429.3px;top:513px">659 kJ</div>
<div class="a" style="left:815px;top:517px;width:14px;height:9px"><svg width="14" height="9" viewBox="0 0 14 9"><rect width="14" height="9" fill="#828200"></rect><rect width="14" height="1" fill="#98982a"></rect><rect width="1" height="9" fill="#90901c"></rect><rect y="8" width="14" height="1" fill="#686800"></rect><rect x="13" width="1" height="9" fill="#6c6c00"></rect></svg></div>
<div class="t" style="left:836.5px;top:513px">fest</div>
<div class="cb cl" style="left:56px;top:533px"><svg width="7" height="7" viewBox="0 0 7 7" shape-rendering="crispEdges"><path d="M0 2h1v1h1v1h1v-1h1v-1h1v-1h1v-1h1v3h-1v1h-1v1h-1v1h-1v1h-1v-1h-1v-1h-1z" fill="#000"></path></svg></div>
<div class="a" style="left:76px;top:533px;width:14px;height:14px"><svg width="14" height="14" viewBox="0 0 14 14"><rect x=".5" y=".5" width="13" height="13" fill="#dfe9f6" stroke="#93a4d0"></rect><rect x="2" y="2" width="10" height="10" fill="#7fa3cc"></rect><rect x="2" y="9.300" width="10" height="2.700" fill="#a6d480"></rect><circle cx="7" cy="5.400" r="3.100" fill="#8cd05c"></circle><rect x="6.200" y="7.500" width="1.600" height="2" fill="#7cc04c"></rect><path d="M2.500 9.300h3.400M8.100 9.300h3.400" stroke="#3a5a32" stroke-width=".9"></path></svg></div>
<div class="t b" style="left:97.3px;top:531px">Mango-Chutney</div>
<div class="t" style="left:480.3px;top:531px">Edeka</div>
<div class="tr" style="right:566.5px;top:531px">12,80 €</div>
<div class="tr" style="right:429.3px;top:531px">837 kJ</div>
<div class="tr" style="right:103.4px;top:531px">700 mg</div>
<div class="tr" style="right:35.6px;top:531px">53 g</div>
<div class="a" style="left:815px;top:535px;width:14px;height:9px"><svg width="14" height="9" viewBox="0 0 14 9"><rect width="14" height="9" fill="#828200"></rect><rect width="14" height="1" fill="#98982a"></rect><rect width="1" height="9" fill="#90901c"></rect><rect y="8" width="14" height="1" fill="#686800"></rect><rect x="13" width="1" height="9" fill="#6c6c00"></rect></svg></div>
<div class="t" style="left:836.5px;top:531px">fest</div>
<div class="cb cl" style="left:56px;top:551px"><svg width="7" height="7" viewBox="0 0 7 7" shape-rendering="crispEdges"><path d="M0 2h1v1h1v1h1v-1h1v-1h1v-1h1v-1h1v3h-1v1h-1v1h-1v1h-1v1h-1v-1h-1v-1h-1z" fill="#000"></path></svg></div>
<div class="a" style="left:76px;top:551px;width:14px;height:14px"><svg width="14" height="14" viewBox="0 0 14 14"><rect x=".5" y=".5" width="13" height="13" fill="#dfe9f6" stroke="#93a4d0"></rect><rect x="2" y="2" width="10" height="10" fill="#7fa3cc"></rect><rect x="2" y="9.300" width="10" height="2.700" fill="#a6d480"></rect><circle cx="7" cy="5.400" r="3.100" fill="#8cd05c"></circle><rect x="6.200" y="7.500" width="1.600" height="2" fill="#7cc04c"></rect><path d="M2.500 9.300h3.400M8.100 9.300h3.400" stroke="#3a5a32" stroke-width=".9"></path></svg></div>
<div class="t b" style="left:97.3px;top:549px">Maultasche(n)</div>
<div class="t" style="left:328.3px;top:549px">Bürger Gmb...</div>
<div class="t" style="left:408.3px;top:549px">Bürger</div>
<div class="tr" style="right:566.5px;top:549px">7,48 €</div>
<div class="tr" style="right:507.5px;top:549px">40,0 g</div>
<div class="tr" style="right:429.3px;top:549px">770 kJ</div>
<div class="tr" style="right:103.4px;top:549px">7,1 g</div>
<div class="tr" style="right:35.6px;top:549px">24 g</div>
<div class="a" style="left:815px;top:553px;width:14px;height:9px"><svg width="14" height="9" viewBox="0 0 14 9"><rect width="14" height="9" fill="#828200"></rect><rect width="14" height="1" fill="#98982a"></rect><rect width="1" height="9" fill="#90901c"></rect><rect y="8" width="14" height="1" fill="#686800"></rect><rect x="13" width="1" height="9" fill="#6c6c00"></rect></svg></div>
<div class="t" style="left:836.5px;top:549px">fest</div>
<div class="t" style="left:880.5px;top:549px">enthält Schweinefleisch</div>
<div class="cb cl" style="left:56px;top:569px"><svg width="7" height="7" viewBox="0 0 7 7" shape-rendering="crispEdges"><path d="M0 2h1v1h1v1h1v-1h1v-1h1v-1h1v-1h1v3h-1v1h-1v1h-1v1h-1v1h-1v-1h-1v-1h-1z" fill="#000"></path></svg></div>
<div class="a" style="left:76px;top:569px;width:14px;height:14px"><svg width="14" height="14" viewBox="0 0 14 14"><rect x=".5" y=".5" width="13" height="13" fill="#dfe9f6" stroke="#93a4d0"></rect><rect x="2" y="2" width="10" height="10" fill="#7fa3cc"></rect><rect x="2" y="9.300" width="10" height="2.700" fill="#a6d480"></rect><circle cx="7" cy="5.400" r="3.100" fill="#8cd05c"></circle><rect x="6.200" y="7.500" width="1.600" height="2" fill="#7cc04c"></rect><path d="M2.500 9.300h3.400M8.100 9.300h3.400" stroke="#3a5a32" stroke-width=".9"></path></svg></div>
<div class="t b" style="left:97.3px;top:567px">Pusztasalat mit Saft</div>
<div class="t" style="left:328.3px;top:567px">J.\u0026am...</div>
<div class="t" style="left:408.3px;top:567px">REWE Be...</div>
<div class="tr" style="right:566.5px;top:567px">4,50 €</div>
<div class="tr" style="right:507.5px;top:567px">330,0 g</div>
<div class="tr" style="right:429.3px;top:567px">151 kJ</div>
<div class="tr" style="right:103.4px;top:567px">100 mg</div>
<div class="tr" style="right:35.6px;top:567px">6,6 g</div>
<div class="a" style="left:815px;top:571px;width:14px;height:9px"><svg width="14" height="9" viewBox="0 0 14 9"><rect width="14" height="9" fill="#828200"></rect><rect width="14" height="1" fill="#98982a"></rect><rect width="1" height="9" fill="#90901c"></rect><rect y="8" width="14" height="1" fill="#686800"></rect><rect x="13" width="1" height="9" fill="#6c6c00"></rect></svg></div>
<div class="t" style="left:836.5px;top:567px">fest</div>
<div class="row" style="top:585px;background:#c0c0c0"></div>
<svg class="a" style="left:40px;top:589px" width="6" height="10" viewBox="0 0 6 10"><path d="M0 0v9.5l5.2-4.75z" fill="#000"></path></svg>
<div class="a" style="left:58px;top:589px;width:10px;height:10px"><svg width="10" height="10" viewBox="0 0 10 10"><defs><radialGradient id="sb" cx=".38" cy=".35" r=".7"><stop offset="0" stop-color="#ffffff"></stop><stop offset=".45" stop-color="#c8c8c8"></stop><stop offset="1" stop-color="#5c5c5c"></stop></radialGradient></defs><circle cx="5" cy="5" r="4" fill="url(#sb)" stroke="#5e5e5e" stroke-width="1"></circle></svg></div>
<div class="t b" style="left:76.7px;top:585px">Suppe</div>
<div class="cb cl" style="left:56px;top:605px"><svg width="7" height="7" viewBox="0 0 7 7" shape-rendering="crispEdges"><path d="M0 2h1v1h1v1h1v-1h1v-1h1v-1h1v-1h1v3h-1v1h-1v1h-1v1h-1v1h-1v-1h-1v-1h-1z" fill="#000"></path></svg></div>
<div class="a" style="left:76px;top:605px;width:14px;height:14px"><svg width="14" height="14" viewBox="0 0 14 14"><rect x=".5" y=".5" width="13" height="13" fill="#dfe9f6" stroke="#93a4d0"></rect><rect x="2" y="2" width="10" height="10" fill="#7fa3cc"></rect><rect x="2" y="9.300" width="10" height="2.700" fill="#a6d480"></rect><circle cx="7" cy="5.400" r="3.100" fill="#8cd05c"></circle><rect x="6.200" y="7.500" width="1.600" height="2" fill="#7cc04c"></rect><path d="M2.500 9.300h3.400M8.100 9.300h3.400" stroke="#3a5a32" stroke-width=".9"></path></svg></div>
<div class="t b" style="left:97.3px;top:603px">Tomato al Gusto mit Kräutern</div>
<div class="t" style="left:328.3px;top:603px">Unilever De...</div>
<div class="t" style="left:408.3px;top:603px">Knorr</div>
<div class="tr" style="right:566.5px;top:603px">3,76 €</div>
<div class="tr" style="right:507.5px;top:603px">370,0 g</div>
<div class="tr" style="right:429.3px;top:603px">141 kJ</div>
<div class="tr" style="right:103.4px;top:603px">800 mg</div>
<div class="tr" style="right:35.6px;top:603px">4,8 g</div>
<div class="a" style="left:815px;top:607px;width:14px;height:10px"><svg width="14" height="10" viewBox="0 0 14 10"><path d="M0 1.3h2.6q1.3 0 2.4 1.5 2 2.4 4 0 1.1-1.5 2.4-1.5h2.6M0 6.3h2.6q1.3 0 2.4 1.5 2 2.4 4 0 1.1-1.5 2.4-1.5h2.6" stroke="#1010b4" stroke-width="1.5" fill="none"></path></svg></div>
<div class="t" style="left:836.5px;top:603px">flüssig</div>
<div class="cb cl" style="left:56px;top:623px"><svg width="7" height="7" viewBox="0 0 7 7" shape-rendering="crispEdges"><path d="M0 2h1v1h1v1h1v-1h1v-1h1v-1h1v-1h1v3h-1v1h-1v1h-1v1h-1v1h-1v-1h-1v-1h-1z" fill="#000"></path></svg></div>
<div class="t b" style="left:97.3px;top:621px">Unox Basis für helle Soßen</div>
<div class="tr" style="right:429.3px;top:621px">297 kJ</div>
<div class="tr" style="right:103.4px;top:621px">5,3 g</div>
<div class="tr" style="right:35.6px;top:621px">4,8 g</div>
<div class="a" style="left:815px;top:625px;width:14px;height:9px"><svg width="14" height="9" viewBox="0 0 14 9"><rect width="14" height="9" fill="#828200"></rect><rect width="14" height="1" fill="#98982a"></rect><rect width="1" height="9" fill="#90901c"></rect><rect y="8" width="14" height="1" fill="#686800"></rect><rect x="13" width="1" height="9" fill="#6c6c00"></rect></svg></div>
<div class="t" style="left:836.5px;top:621px">fest</div>
<div class="row" style="top:639px;background:#ffaaaa"></div>
<svg class="a" style="left:22px;top:643px" width="6" height="10" viewBox="0 0 6 10"><path d="M0 0v9.5l5.2-4.75z" fill="#000"></path></svg>
<div class="a" style="left:37px;top:640px;width:16px;height:16px"><svg width="16" height="16" viewBox="0 0 16 16"><path d="M0.5 7q0-4.5 4-4.4 3.6.1 6 3l4.6 3.4q.9 1-.2 1.8l-4.4-1q-3 2.4-6.4 1.4-3.6-1-3.6-4.200z" fill="#dc9a6c"></path><path d="M0.5 7q0-4.5 4-4.400" stroke="#b8664a" stroke-width="1" fill="none"></path><ellipse cx="3.6" cy="7.2" rx="2.4" ry="3.6" fill="#c8705a"></ellipse><ellipse cx="3.4" cy="8" rx=".9" ry="1.5" fill="#f6dcc8"></ellipse><path d="M6.5 4.5l6 5.500" stroke="#e8b480" stroke-width="1.6"></path><path d="M11 9l4 1.800" stroke="#d08a58" stroke-width="1.400"></path></svg></div>
<div class="t b" style="left:59.1px;top:639px">Fleisch, Wild, Geflügel, Fisch</div>
<div class="row" style="top:657px;background:#a0ffa0"></div>
<svg class="a" style="left:22px;top:661px" width="6" height="10" viewBox="0 0 6 10"><path d="M0 0v9.5l5.2-4.75z" fill="#000"></path></svg>
<div class="a" style="left:37px;top:658px;width:16px;height:16px"><svg width="16" height="16" viewBox="0 0 16 16"><circle cx="11.9" cy="7.2" r="3.7" fill="#e0141c"></circle><circle cx="4.9" cy="8.9" r="4.4" fill="#e8181e"></circle><circle cx="3.6" cy="7.6" r="1.4" fill="#ff5a50"></circle><circle cx="11" cy="6.200" r="1.1" fill="#ff5a50"></circle><path d="M3.5 5l2.2-2.600 1 2.600zM10.500 4l1.800-2.200.8 2.200z" fill="#2e9a3a"></path><path d="M2 12.500q3 1.800 6 0" stroke="#a00c10" stroke-width=".8" fill="none"></path></svg></div>
<div class="t b" style="left:59.1px;top:657px">Gemüse und Kartoffelprodukte</div>
<div class="row" style="top:675px;background:#a0ffff"></div>
<svg class="a" style="left:22px;top:679px" width="6" height="10" viewBox="0 0 6 10"><path d="M0 0v9.5l5.2-4.75z" fill="#000"></path></svg>
<div class="a" style="left:37px;top:676px;width:16px;height:16px"><svg width="16" height="16" viewBox="0 0 16 16"><rect x="6.800" y="0" width="2.400" height="7" fill="#c8b050"></rect><rect x="7.400" y="0" width="1" height="6" fill="#eadc90"></rect><path d="M4.900 8.500q3-3.500 6 0v7.500h-6z" fill="#18261e"></path><rect x="6" y="6.500" width="1" height="4" fill="#e8e8d8"></rect><rect x="5.200" y="11" width="5.400" height="2.600" fill="#d8d8d0"></rect><rect x="5.200" y="11.900" width="5.400" height=".8" fill="#806a5a"></rect></svg></div>
<div class="t b" style="left:59.1px;top:675px">Getränke und Säfte</div>
<div class="row" style="top:693px;background:#ffc0a0"></div>
<svg class="a" style="left:22px;top:697px" width="6" height="10" viewBox="0 0 6 10"><path d="M0 0v9.5l5.2-4.75z" fill="#000"></path></svg>
<div class="a" style="left:37px;top:694px;width:16px;height:16px"><svg width="16" height="16" viewBox="0 0 16 16"><path d="M1 14.200l10-11.700" stroke="#d8a828" stroke-width="4.200" stroke-linecap="round"></path><path d="M1.500 13.500l9-10.500" stroke="#f6dc6c" stroke-width="1.400" stroke-dasharray="1.500 1.200"></path><path d="M4 14.800l11-2.200M5 12.500l8.500-5" stroke="#e4b83a" stroke-width="1.500" stroke-linecap="round"></path><path d="M3 15.500h11" stroke="#eccb58" stroke-width="1"></path></svg></div>
<div class="t b" style="left:59.1px;top:693px">Getreideprodukte</div>
<div class="row" style="top:711px;background:#dcdcdc"></div>
<svg class="a" style="left:22px;top:715px" width="6" height="10" viewBox="0 0 6 10"><path d="M0 0v9.5l5.2-4.75z" fill="#000"></path></svg>
<div class="a" style="left:37px;top:712px;width:16px;height:16px"><svg width="16" height="16" viewBox="0 0 16 16"><path d="M6.500 8.500l5-6.500q2.600-1.200 3.800 1.400l-4.800 7z" fill="#bfe4ea" stroke="#8fb8c4" stroke-width=".7"></path><path d="M2.200 7.200l3-2.200 5 5.200-3.200 2.600z" fill="#6e6e6e"></path><path d="M3.500 6.500l4.500 4.800" stroke="#bdbdbd" stroke-width="1"></path><rect x="1" y="11.500" width="1.200" height="1.200" fill="#fff"></rect><rect x="3" y="13.500" width="1.200" height="1.200" fill="#fff"></rect><rect x="0" y="14.500" width="1.200" height="1.200" fill="#fff"></rect></svg></div>
<div class="t b" style="left:59.1px;top:711px">Gewürze, Kräuter, etc.</div>
<div class="row" style="top:729px;background:#ffffff"></div>
<svg class="a" style="left:22px;top:733px" width="6" height="10" viewBox="0 0 6 10"><path d="M0 0v9.5l5.2-4.75z" fill="#000"></path></svg>
<div class="a" style="left:37px;top:730px;width:16px;height:16px"><svg width="16" height="16" viewBox="0 0 16 16"><path d="M4 4q0-3.800 4-3.800t4 3.800v10.500q-4 2.500-8 0z" fill="#2f9cec"></path><path d="M10.500 2v13" stroke="#1c6fc8" stroke-width="1.600"></path><rect x="5.500" y="4.500" width="3.600" height="5.500" fill="#e4f2ff"></rect><rect x="5.500" y="7" width="2" height="3" fill="#9ccdf6"></rect><path d="M4 14.500q4 2.500 8 0" stroke="#1c6fc8" stroke-width=".8" fill="none"></path></svg></div>
<div class="t b" style="left:59.1px;top:729px">Milchprodukte</div>
<div class="row" style="top:747px;background:#ffffa0"></div>
<svg class="a" style="left:22px;top:751px" width="6" height="10" viewBox="0 0 6 10"><path d="M0 0v9.5l5.2-4.75z" fill="#000"></path></svg>
<div class="a" style="left:37px;top:748px;width:16px;height:16px"><svg width="16" height="16" viewBox="0 0 16 16"><path d="M1.500 3.500q1.500 8.500 9.500 9.300 3.500 0 4.600-6.300l-1.300-.5q-1.500 3.800-5 3.200-4.500-1-6-6.500z" fill="#f2d21e"></path><path d="M3 4.500q2 6 8.500 6.500 2.500-.3 4-4" stroke="#fbe96a" stroke-width="1.200" fill="none"></path><path d="M2.500 8q2.500 5 8.500 4.800" stroke="#a8900c" stroke-width=".8" fill="none"></path><path d="M.900 1.800l2 .4.600 2.600-2-.6z" fill="#3c4410"></path><path d="M14.300 6l1.300.500" stroke="#6a5a10" stroke-width="1"></path></svg></div>
<div class="t b" style="left:59.1px;top:747px">Obst und Früchte</div>
<div class="a" style="left:1146px;top:225px;width:17px;height:540px;background:#f0f0f0"></div>
<div class="a" style="left:1147px;top:242px;width:15px;height:460px;background:#cdcdcd"></div>
<svg class="a" style="left:1150px;top:231px" width="9" height="6" viewBox="0 0 9 6"><path d="M1 5l3.5-3.5 3.5 3.5" stroke="#404040" stroke-width="2" fill="none"></path></svg>
<svg class="a" style="left:1150px;top:754px" width="9" height="6" viewBox="0 0 9 6"><path d="M1 1l3.5 3.5 3.5-3.5" stroke="#404040" stroke-width="2" fill="none"></path></svg>
<div class="a" style="left:15px;top:765px;width:1148px;height:17px;background:#f0f0f0"></div>
<div class="a" style="left:32px;top:766px;width:429px;height:15px;background:#cdcdcd"></div>
<svg class="a" style="left:20px;top:769px" width="6" height="9" viewBox="0 0 6 9"><path d="M5 1l-3.5 3.5 3.5 3.5" stroke="#404040" stroke-width="2" fill="none"></path></svg>
<svg class="a" style="left:1135px;top:769px" width="6" height="9" viewBox="0 0 6 9"><path d="M1 1l3.5 3.5-3.5 3.5" stroke="#404040" stroke-width="2" fill="none"></path></svg>
<div class="a" style="left:8px;top:788px;width:1162px;height:1px;background:#a0a0a0"></div>
<div class="a" style="left:8px;top:789px;width:1162px;height:1px;background:#fff"></div>
<div class="a" style="left:8px;top:791px;width:180px;height:17px;border:1px solid;border-color:#a0a0a0 #fff #fff #a0a0a0"></div>
<div class="a" style="left:190px;top:791px;width:178px;height:17px;border:1px solid;border-color:#a0a0a0 #fff #fff #a0a0a0"></div>
<div class="a" style="left:370px;top:791px;width:800px;height:17px;border:1px solid;border-color:#a0a0a0 #fff #fff #a0a0a0"></div>
<div class="a" style="left: 11px; top: 792px; line-height: 17px; white-space: nowrap; transform-origin: 0px 0px; transform: scaleX(0.9715);">492 von 492 Lebensmitteln</div>
<div class="a" style="left: 192px; top: 792px; line-height: 17px; white-space: nowrap; transform-origin: 0px 0px; transform: scaleX(0.9827);">Zwischenablage: [leer]</div>
<svg class="a" style="left:1156px;top:794px" width="13" height="13" viewBox="0 0 13 13"><path d="M13 3.200l-10 10M13 7.200l-6 6M13 11.200l-2 2" stroke="#fff" stroke-width="1.200"></path><path d="M13 2l-11 11M13 6l-7 7M13 10l-3 3" stroke="#8c8c8c" stroke-width="1.500"></path></svg>
</div></body></html>
